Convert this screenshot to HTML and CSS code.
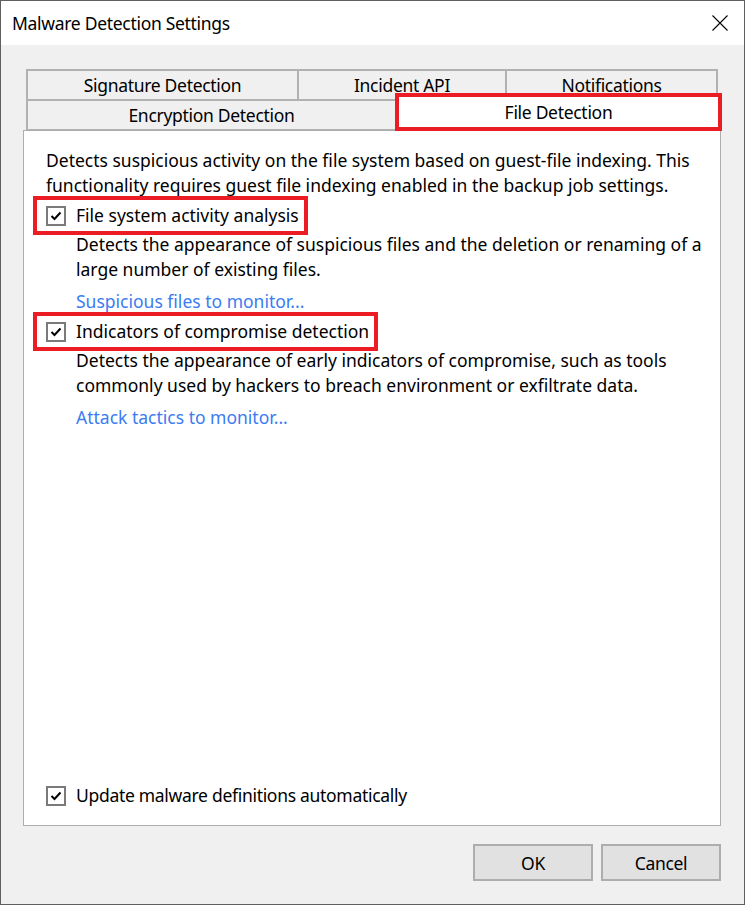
FILE: index.html
```html
<!DOCTYPE html>
<html lang="en">
<head>
  <meta charset="UTF-8">
  <title>Malware Detection Settings</title>
  <link rel="stylesheet" href="styles.css">
</head>
<body>
  <div class="window">
    <div class="titlebar">
      <span class="title">Malware Detection Settings</span>
      <svg class="close" width="16" height="16" viewBox="0 0 16 16">
        <path d="M0.5 0.5 L15.5 15.5 M15.5 0.5 L0.5 15.5" stroke="#000" stroke-width="1.1" fill="none"/>
      </svg>
    </div>

    <div class="content">
      <div class="tabs">
        <div class="tab-row">
          <div class="tab tab-sig">Signature Detection</div>
          <div class="tab tab-api">Incident API</div>
          <div class="tab tab-notify">Notifications</div>
        </div>
        <div class="tab-row">
          <div class="tab tab-enc">Encryption Detection</div>
          <div class="tab tab-active">File Detection</div>
        </div>
      </div>

      <div class="panel">
        <p class="intro">Detects suspicious activity on the file system based on guest-file indexing. This functionality requires guest file indexing enabled in the backup job settings.</p>

        <div class="option">
          <label class="check marked">
            <span class="box"><svg width="12" height="10" viewBox="0 0 12 10"><path d="M1.5 5 L4.5 8 L10.5 1.5" stroke="#000" stroke-width="2" fill="none"/></svg></span>
            File system activity analysis
          </label>
          <p class="desc">Detects the appearance of suspicious files and the deletion or renaming of a large number of existing files.</p>
          <a class="link" href="#">Suspicious files to monitor...</a>
        </div>

        <div class="option">
          <label class="check marked">
            <span class="box"><svg width="12" height="10" viewBox="0 0 12 10"><path d="M1.5 5 L4.5 8 L10.5 1.5" stroke="#000" stroke-width="2" fill="none"/></svg></span>
            Indicators of compromise detection
          </label>
          <p class="desc">Detects the appearance of early indicators of compromise, such as tools commonly used by hackers to breach environment or exfiltrate data.</p>
          <a class="link" href="#">Attack tactics to monitor...</a>
        </div>

        <label class="check check-update">
          <span class="box"><svg width="12" height="10" viewBox="0 0 12 10"><path d="M1.5 5 L4.5 8 L10.5 1.5" stroke="#000" stroke-width="2" fill="none"/></svg></span>
          <span class="narrow">Update malware definitions automatically</span>
        </label>
      </div>

      <div class="buttons">
        <button class="btn">OK</button>
        <button class="btn">Cancel</button>
      </div>
    </div>
  </div>
</body>
</html>
```

FILE: styles.css
```css
body {
  margin: 0;
  font-family: "Noto Sans", "Open Sans", sans-serif;
  color: #000;
}
.window {
  height: 905px;
  box-sizing: border-box;
  border: 1px solid #5f5f5f;
  background: #f0f0f0;
  display: flex;
  flex-direction: column;
}
.titlebar {
  height: 44px;
  background: #fff;
  display: flex;
  align-items: center;
  justify-content: space-between;
  padding: 0 16px 0 11px;
}
.title {
  font-size: 17.5px;
  font-stretch: condensed;
  letter-spacing: -0.3px;
}
.content {
  flex: 1;
  display: flex;
  flex-direction: column;
  padding: 25px 23px 23px 22px;
}
.tabs {
  padding: 0 3px;
}
.tab-row {
  display: flex;
  height: 30px;
  align-items: flex-end;
}
.tab {
  box-sizing: border-box;
  height: 31px;
  border: 2px solid #b1b1b1;
  border-bottom-width: 1px;
  background: #f0f0f0;
  font-size: 17.5px;
  font-stretch: condensed;
  letter-spacing: -0.3px;
  display: flex;
  align-items: center;
  justify-content: center;
  padding-bottom: 1px;
}
.tab + .tab {
  margin-left: -2px;
}
.tab-sig { width: 273px; }
.tab-api { width: 210px; }
.tab-notify { flex: 1; }
.tab-enc { width: 371px; }
.tab-active {
  position: relative;
  z-index: 1;
  flex: 1;
  height: 38px;
  margin: 0 -4px -1px -5px;
  border: 4px solid #ec1c24;
  background: #fff;
  padding-top: 1px;
}
.panel {
  flex: 1;
  background: #fff;
  border: 1px solid #adadad;
  display: flex;
  flex-direction: column;
  padding: 17px 16px 17px 22px;
  font-size: 17.5px;
  line-height: 25px;
}
.intro, .desc {
  margin: 0;
}
.option {
  display: flex;
  flex-direction: column;
  align-items: flex-start;
}
.check {
  display: inline-flex;
  align-items: center;
  gap: 10px;
}
.check.marked {
  box-sizing: border-box;
  height: 39px;
  border: 4px solid #ec1c24;
  padding: 0 5px 0 9px;
  margin: -2px 0 -3px -13px;
}
.box {
  box-sizing: border-box;
  width: 20px;
  height: 20px;
  border: 2px solid #7a7a7a;
  display: flex;
  align-items: center;
  justify-content: center;
  background: #fff;
}
.desc {
  padding-left: 30px;
}
.link {
  margin: 7px 0 0 30px;
  color: #3a7cf2;
  text-decoration: none;
}
.check-update {
  margin-top: auto;
}
.narrow {
  font-size: 17.5px;
  font-stretch: condensed;
  letter-spacing: -0.3px;
}
.buttons {
  display: flex;
  justify-content: flex-end;
  gap: 8px;
  margin-top: 18px;
}
.btn {
  width: 120px;
  height: 37px;
  background: #e1e1e1;
  border: 2px solid #adadad;
  font-family: "Noto Sans", sans-serif;
  font-size: 17.5px;
  font-stretch: condensed;
  letter-spacing: -0.3px;
  color: #000;
}
```
